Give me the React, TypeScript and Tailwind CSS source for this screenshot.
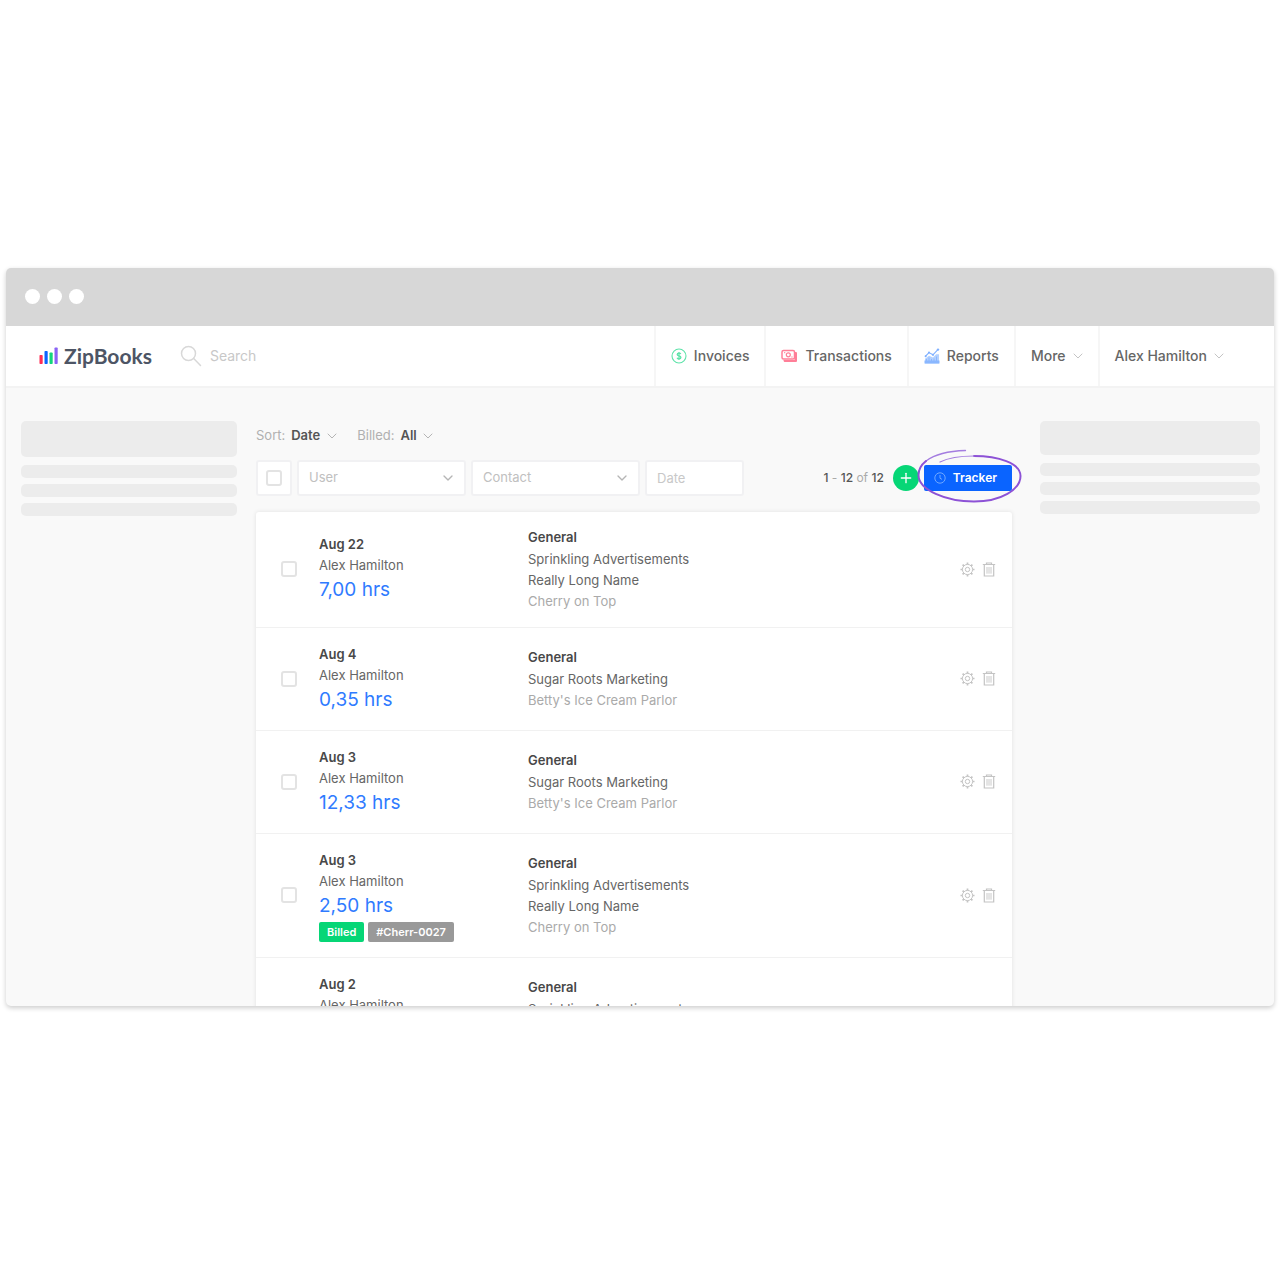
import { useState } from 'react';
import { ChevronDown, Plus } from 'lucide-react';

type Entry = {
  id: number;
  date: string;
  user: string;
  hours: string;
  project: string[];
  contact: string;
  invoice?: string;
};

const entries: Entry[] = [
  { id: 1, date: 'Aug 22', user: 'Alex Hamilton', hours: '7,00 hrs', project: ['Sprinkling Advertisements', 'Really Long Name'], contact: 'Cherry on Top' },
  { id: 2, date: 'Aug 4', user: 'Alex Hamilton', hours: '0,35 hrs', project: ['Sugar Roots Marketing'], contact: "Betty's Ice Cream Parlor" },
  { id: 3, date: 'Aug 3', user: 'Alex Hamilton', hours: '12,33 hrs', project: ['Sugar Roots Marketing'], contact: "Betty's Ice Cream Parlor" },
  { id: 4, date: 'Aug 3', user: 'Alex Hamilton', hours: '2,50 hrs', project: ['Sprinkling Advertisements', 'Really Long Name'], contact: 'Cherry on Top', invoice: '#Cherr-0027' },
  { id: 5, date: 'Aug 2', user: 'Alex Hamilton', hours: '2,50 hrs', project: ['Sprinkling Advertisements', 'Really Long Name'], contact: 'Cherry on Top', invoice: '#Cherr-0027' },
];

function LogoBars() {
  return (
    <svg width="20" height="18" viewBox="0 0 20 18" aria-hidden="true">
      <rect x="0.5" y="8" width="3.2" height="9" rx="0.8" fill="#ff2d55" />
      <rect x="5.5" y="4" width="3.2" height="13" rx="0.8" fill="#0a64ff" />
      <rect x="10.5" y="5.5" width="3.2" height="11.5" rx="0.8" fill="#12d67c" />
      <rect x="15.5" y="0.5" width="3.2" height="16.5" rx="0.8" fill="#8a63f5" />
    </svg>
  );
}

function SearchIcon() {
  return (
    <svg className="shrink-0" width="22" height="22" viewBox="0 0 22 22" fill="none" stroke="#d8d8d8" strokeWidth="1.5" strokeLinecap="round" aria-hidden="true">
      <circle cx="8.5" cy="8.5" r="7" />
      <path d="M13.700 13.500 20.500 20.500" />
    </svg>
  );
}

function InvoiceIcon() {
  return (
    <svg width="16" height="16" viewBox="0 0 16 16" fill="none" stroke="#5fe3aa" aria-hidden="true">
      <circle cx="8" cy="8" r="7" strokeWidth="1.1" />
      <path d="M9.8 6.1C9.5 5.4 8.9 5.1 8 5.1c-1 0-1.8.5-1.8 1.4 0 2 3.7.9 3.7 3 0 .9-.8 1.4-1.900 1.400-1 0-1.700-.4-1.900-1.100M8 3.900v8.200" strokeWidth="1.3" />
    </svg>
  );
}

function TransactionIcon() {
  return (
    <svg width="17" height="14" viewBox="0 0 17 14" fill="none" aria-hidden="true">
      <path d="M2.5 11h11V3h1.2c.8 0 1.3.5 1.3 1.3v7.4c0 .8-.5 1.3-1.3 1.3H4c-.9 0-1.5-.6-1.5-1.5z" fill="#ff7f98" />
      <rect x="1" y="1.5" width="12.5" height="8.5" rx="1.5" stroke="#ff7f98" strokeWidth="1.5" fill="#fff" />
      <circle cx="7.3" cy="5.8" r="2" stroke="#ff7f98" strokeWidth="1.2" />
      <path d="M3 3.7h1.3M10.3 8h1.3" stroke="#ff7f98" />
    </svg>
  );
}

function ReportIcon() {
  return (
    <svg width="16" height="16" viewBox="0 0 16 16" fill="none" aria-hidden="true">
      <path d="M1 15.5v-4.7l4-3.1 4 1.9 3.2-3.3H15v9.2z" fill="#b3d1ff" />
      <path d="M.5 12.5h15v3H.5z" fill="#8ab7ff" />
      <path d="M2.5 13v-2M5 13V9.5M7.5 13v-2M10 13v-2.5M12.5 13V8.5" stroke="#8ab7ff" />
      <path d="M1.2 8.5 5 4.6l4 2.2 4.6-4.9" stroke="#7fb0ff" strokeWidth="1.1" />
      <circle cx="1.6" cy="8.3" r="1" fill="#7fb0ff" />
      <circle cx="5" cy="4.6" r="1.1" fill="#7fb0ff" />
      <circle cx="9" cy="6.8" r="1.1" fill="#7fb0ff" />
      <circle cx="14" cy="1.6" r="1.2" fill="#7fb0ff" />
    </svg>
  );
}

function GearIcon() {
  return (
    <svg width="15" height="15" viewBox="0 0 15 15" fill="none" stroke="#c4c4c4" aria-hidden="true">
      <circle cx="7.5" cy="7.5" r="5.1" />
      <circle cx="7.5" cy="7.5" r="2.2" />
      <path d="M7.5.5v1.9M7.5 12.6v1.9M.5 7.5h1.9M12.6 7.5h1.9M2.6 2.6l1.3 1.3M11.1 11.1l1.3 1.3M12.4 2.6l-1.3 1.3M3.9 11.1l-1.3 1.3" strokeWidth="1.7" />
    </svg>
  );
}

function TrashIcon() {
  return (
    <svg width="14" height="15" viewBox="0 0 14 15" fill="none" stroke="#c4c4c4" aria-hidden="true">
      <path d="M.8 2.5h12.4M4.5 2.3V1h5v1.3M2.3 2.7v11.3h9.4V2.7" strokeWidth="1.2" />
      <path d="M5 5v6.7M7 5v6.7M9 5v6.7" strokeWidth="0.9" />
    </svg>
  );
}

function ClockIcon() {
  return (
    <svg width="12" height="12" viewBox="0 0 12 12" fill="none" stroke="#7cb0ff" aria-hidden="true">
      <circle cx="6" cy="6" r="5.2" strokeWidth="0.9" />
      <path d="M6 3v3.2l2 1.2" strokeWidth="0.9" />
    </svg>
  );
}

// Hand-drawn ring around the tracker button
function Scribble() {
  return (
    <svg
      className="pointer-events-none absolute -top-4 -left-2 z-10 max-w-none"
      width="106"
      height="56"
      viewBox="0 0 106 56"
      fill="none"
      strokeLinecap="round"
      aria-hidden="true"
    >
      <path d="M49.500 1.500C32 2 18 6 10 12" stroke="#a47de0" strokeWidth="1.300" />
      <path d="M10 12C5 16 2.500 20 2.500 26 2.500 41 30 52.500 58 52.500c27 0 46.500-12 46.500-25.500C104.500 14 82 7 58 7" stroke="#8d52d6" strokeWidth="2" />
      <path d="M58 7c-14 0-26 2-34 6" stroke="#a47de0" strokeWidth="1.200" />
    </svg>
  );
}

const boxClass =
  'block size-4 appearance-none rounded-[3px] border-2 border-[#e3e3e3] bg-white checked:border-[#0a64ff] checked:bg-[#0a64ff]';

function Placeholder({ className, titleClass }: { className: string; titleClass: string }) {
  return (
    <div className={`hidden shrink-0 flex-col pt-[33px] lg:flex ${className}`}>
      <div className={`mb-2 rounded-[5px] bg-[#ececec] ${titleClass}`} />
      <div className="flex flex-col gap-[6px]">
        <div className="h-[13px] rounded-[5px] bg-[#ececec]" />
        <div className="h-[13px] rounded-[5px] bg-[#ececec]" />
        <div className="h-[13px] rounded-[5px] bg-[#ececec]" />
      </div>
    </div>
  );
}

function InlineSelect({ id, label, value }: { id: string; label: string; value: string }) {
  return (
    <div className="flex items-center gap-[6px]">
      <label htmlFor={id} className="text-[#b0b0b0]">{label}</label>
      <div className="relative flex items-center">
        <select id={id} className="appearance-none bg-transparent pr-[19px] font-semibold text-[#555]">
          <option>{value}</option>
        </select>
        <ChevronDown className="pointer-events-none absolute right-0 text-[#b5b5b5]" size={16} strokeWidth={1.5} />
      </div>
    </div>
  );
}

function FilterSelect({ label }: { label: string }) {
  return (
    <div className="relative flex w-[169px] items-center">
      <select aria-label={label} className="h-9 w-full appearance-none rounded-[3px] border-2 border-[#f1f1f3] bg-white px-[10px] text-[#c0c0c0]">
        <option>{label}</option>
      </select>
      <ChevronDown className="pointer-events-none absolute right-[10px] text-[#b5b5b5]" size={16} />
    </div>
  );
}

function EntryRow({ entry }: { entry: Entry }) {
  return (
    <tr className="border-b border-[#f1f1f1]">
      <td className="w-[63px] py-[15px] pl-[25px]">
        <input type="checkbox" aria-label={`${entry.date} ${entry.hours}`} className={boxClass} />
      </td>
      <td className="w-[209px] py-[15px]">
        <p className="leading-[22px] font-semibold text-[#484848]">{entry.date}</p>
        <p className="leading-5 text-[#666]">{entry.user}</p>
        <p className="text-[19px] leading-[30px] text-[#2f7bff]">{entry.hours}</p>
        {entry.invoice && (
          <div className="flex gap-1 pt-px text-[11px] leading-5 font-semibold text-white">
            <span className="rounded-[2px] bg-[#06d676] px-2">Billed</span>
            <span className="rounded-[2px] bg-[#999] px-2">{entry.invoice}</span>
          </div>
        )}
      </td>
      <td className="py-[15px]">
        <p className="mb-[2px] leading-5 font-semibold text-[#484848]">General</p>
        {entry.project.map((line) => (
          <p key={line} className="leading-[21px] text-[#666]">{line}</p>
        ))}
        <p className="leading-[21px] text-[#aaa]">{entry.contact}</p>
      </td>
      <td className="py-[15px] pr-4">
        <div className="flex items-center justify-end gap-[7px]">
          <button type="button" aria-label="Settings"><GearIcon /></button>
          <button type="button" aria-label="Delete"><TrashIcon /></button>
        </div>
      </td>
    </tr>
  );
}

export default function App() {
  const [query, setQuery] = useState('');

  return (
    <div className="flex min-h-screen items-center bg-white px-[6px] pb-[7px] font-['Inter',sans-serif] text-[13px]">
      <div className="aspect-[1268/738] w-full overflow-hidden rounded-[5px] bg-[#f9f9f9] shadow-[0_2px_5px_rgba(0,0,0,0.2)]">
        {/* Window bar */}
        <div className="flex h-[58px] items-center gap-[7px] bg-[#d7d7d7] px-[19px]">
          <span className="size-[15px] rounded-full bg-white" />
          <span className="size-[15px] rounded-full bg-white" />
          <span className="size-[15px] rounded-full bg-white" />
        </div>

        {/* Header */}
        <header className="flex h-[62px] border-b-2 border-[#f3f3f3] bg-white text-sm font-medium text-[#666]">
          <a href="#" className="flex items-center gap-[5px] pl-[33px] font-['Lato',sans-serif] text-[21px] font-bold text-[#4d5565]">
            <LogoBars />
            ZipBooks
          </a>
          <label className="ml-7 flex flex-1 items-center gap-2">
            <SearchIcon />
            <input
              type="text"
              aria-label="Search"
              placeholder="Search"
              value={query}
              onChange={(e) => setQuery(e.target.value)}
              className="w-full min-w-0 font-normal outline-none placeholder:text-[#c8c8c8]"
            />
          </label>
          <nav className="flex">
            <a href="#" className="flex items-center gap-[7px] border-l-2 border-[#f6f6f6] px-[15px]"><InvoiceIcon />Invoices</a>
            <a href="#" className="flex items-center gap-[7px] border-l-2 border-[#f6f6f6] px-[15px]"><TransactionIcon />Transactions</a>
            <a href="#" className="flex items-center gap-[7px] border-l-2 border-[#f6f6f6] px-[15px]"><ReportIcon />Reports</a>
            <button type="button" className="flex items-center gap-1 border-l-2 border-[#f6f6f6] pr-3 pl-[15px]">
              More <ChevronDown className="text-[#c4c4c4]" size={16} strokeWidth={1.5} />
            </button>
            <button type="button" className="flex items-center gap-1 border-l-2 border-[#f6f6f6] pr-[47px] pl-[15px]">
              Alex Hamilton <ChevronDown className="text-[#c4c4c4]" size={16} strokeWidth={1.5} />
            </button>
          </nav>
        </header>

        <div className="flex pr-[14px] pl-[15px]">
          <Placeholder className="mr-[19px] w-[216px]" titleClass="h-9" />

          <main className="min-w-0 flex-1 pt-[38px]">
            <div className="mb-[14px] flex h-5 items-center gap-[17px]">
              <InlineSelect id="sort" label="Sort:" value="Date" />
              <InlineSelect id="billed" label="Billed:" value="All" />
            </div>

            {/* Filters */}
            <div className="mb-4 flex items-center gap-[5px]">
              <label className="flex size-9 items-center justify-center rounded-[3px] border-2 border-[#f1f1f3] bg-white">
                <input type="checkbox" aria-label="Select all" className={boxClass} />
              </label>
              <FilterSelect label="User" />
              <FilterSelect label="Contact" />
              <input
                type="text"
                aria-label="Date"
                placeholder="Date"
                className="h-9 w-[99px] rounded-[3px] border-2 border-[#f1f1f3] bg-white px-[10px] placeholder:text-[#c8c8c8]"
              />
              <p className="ml-auto pr-1 text-xs text-[#aaa]">
                <span className="font-medium text-[#555]">1</span> - <span className="font-medium text-[#555]">12</span> of{' '}
                <span className="font-medium text-[#555]">12</span>
              </p>
              <button type="button" aria-label="Add" className="flex size-[26px] items-center justify-center rounded-full bg-[#06d676] text-white">
                <Plus size={16} strokeWidth={2} />
              </button>
              <div className="relative">
                <button type="button" className="flex h-[26px] items-center gap-[7px] rounded-[2px] bg-[#0a64ff] pr-[15px] pl-[10px] text-xs font-semibold text-white">
                  <ClockIcon />
                  Tracker
                </button>
                <Scribble />
              </div>
            </div>

            {/* Time entries */}
            <table className="w-full rounded-t-[3px] bg-white shadow-[0_0_4px_rgba(0,0,0,0.1)]">
              <tbody>
                {entries.map((entry) => (
                  <EntryRow key={entry.id} entry={entry} />
                ))}
              </tbody>
            </table>
          </main>

          <Placeholder className="ml-7 w-[220px]" titleClass="h-[34px]" />
        </div>
      </div>
    </div>
  );
}
